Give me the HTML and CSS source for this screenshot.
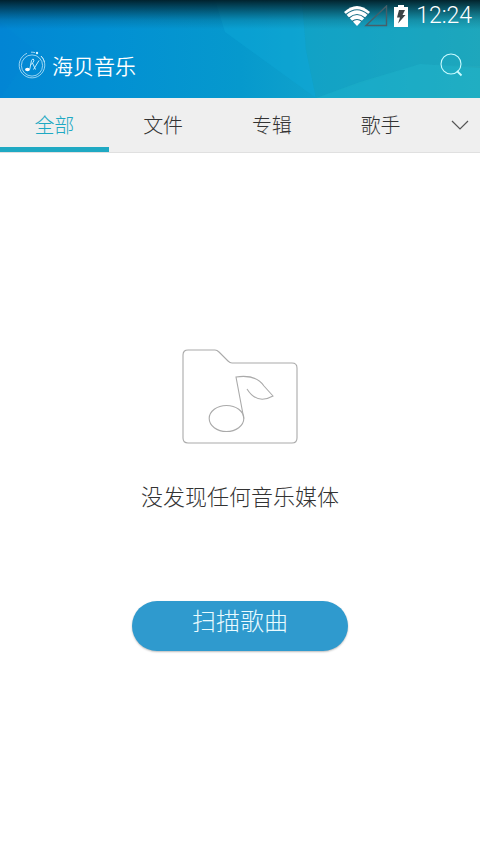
FILE: index.html
```html
<!DOCTYPE html>
<html lang="zh-CN">
<head>
<meta charset="utf-8">
<meta name="viewport" content="width=device-width, initial-scale=1">
<title>海贝音乐</title>
<link rel="stylesheet" href="styles.css">
</head>
<body>
<header class="header">
  <svg class="header-art" viewBox="0 0 480 98" preserveAspectRatio="none" aria-hidden="true">
    <defs>
      <linearGradient id="sky" x1="0" x2="1" y1="0" y2="0">
        <stop offset="0" stop-color="#0287d4"/>
        <stop offset=".22" stop-color="#0290d3"/>
        <stop offset=".5" stop-color="#0699cd"/>
        <stop offset=".66" stop-color="#10a2cb"/>
        <stop offset="1" stop-color="#22a9bc"/>
      </linearGradient>
      <linearGradient id="shade" x1="0" x2="0" y1="0" y2="1">
        <stop offset="0" stop-color="#001820" stop-opacity=".92"/>
        <stop offset=".3" stop-color="#00222d" stop-opacity=".62"/>
        <stop offset=".7" stop-color="#002e3c" stop-opacity=".18"/>
        <stop offset="1" stop-color="#003344" stop-opacity="0"/>
      </linearGradient>
    </defs>
    <rect width="480" height="98" fill="url(#sky)"/>
    <path d="M0 22 35 50 0 98Z" fill="#0580d5" opacity=".15"/>
    <path d="M215 0H302L306 50 316 98 225 32Z" fill="#10a9da" opacity=".4"/>
    <path d="M302 0H480V66L420 64 316 98 306 50Z" fill="#18a2be" opacity=".35"/>
    <path d="M316 98 360 82 420 64 480 68V98Z" fill="#20b4c9" opacity=".45"/>
    <rect width="480" height="29" fill="url(#shade)"/>
  </svg>
  <div class="status">
    <svg class="wifi" viewBox="0 0 26 22" aria-label="Wi-Fi" role="img">
      <path d="M0 7Q13-5 26 7L13 21Z" fill="#fff"/>
      <path d="M2 9.500Q13 0 24 9.500M5 13Q13 6 21 13M8 16.500Q13 12.500 18 16.500" fill="none" stroke="#1a6f87" stroke-width="1.100"/>
    </svg>
    <svg class="signal" viewBox="0 0 24 22" aria-label="无信号" role="img">
      <path d="M2 20.500H22.500V1Z" fill="none" stroke="#465f69" stroke-width="1.400"/>
    </svg>
    <svg class="battery" viewBox="0 0 14 22" aria-label="充电中" role="img">
      <path d="M0 2H4V0H10V2H14V22H0Z" fill="#fff"/>
      <path d="M5 5H11L8.500 10H11.500L4 18.500 6 12.500H3Z" fill="#3c4346"/>
    </svg>
    <time class="clock">12:24</time>
  </div>
  <div class="titlebar">
    <svg class="logo" viewBox="0 0 28 28" fill="none" stroke="#d8f4ff" aria-hidden="true">
      <path d="M9 2.300A12.800 12.800 0 1 0 23 5M13 1.200A13 13 0 0 1 17 1.600M23 5A12.800 12.800 0 0 1 26.500 11" stroke-width=".7"/>
      <circle cx="14" cy="14.500" r="10.600" stroke-width=".7"/>
      <circle cx="19" cy="2" r="1.200" fill="#d8f4ff" stroke="none"/>
      <ellipse cx="9.500" cy="18.500" rx="2.400" ry="1.700" fill="#fff" stroke="none"/>
      <path d="M11.700 18.500 13.500 9.500Q15 6.500 16 9Q16 11.500 12.500 14M14.500 12 17.500 18.500M21 9.500 15.500 18.500" stroke-width=".9"/>
    </svg>
    <h1 class="title">海贝音乐</h1>
    <button class="search" type="button" aria-label="搜索">
      <svg viewBox="0 0 24 24" fill="none" stroke="#c9fbff" aria-hidden="true">
        <circle cx="11" cy="11" r="10" stroke-width="1.100"/>
        <path d="M17 18 21.500 22.500" stroke-width="1.800"/>
      </svg>
    </button>
  </div>
</header>
<nav class="tabs">
  <a class="tab active" href="#all" aria-current="page">全部</a>
  <a class="tab" href="#files">文件</a>
  <a class="tab" href="#albums">专辑</a>
  <a class="tab" href="#artists">歌手</a>
  <button class="more" type="button" aria-label="更多">
    <svg viewBox="0 0 18 10" fill="none" stroke="#555" stroke-width="1.200" aria-hidden="true"><path d="M1 1 9 9 17 1"/></svg>
  </button>
</nav>
<main class="empty">
  <svg class="folder" viewBox="0 0 116 96" fill="none" stroke="#aaa" stroke-width="1.100" aria-hidden="true">
    <path d="M6 1H33Q35 1 37 3L46 12Q48 14 50 14H110Q115 14 115 19V89Q115 94 110 94H6Q1 94 1 89V6Q1 1 6 1Z"/>
    <ellipse cx="44.500" cy="69.500" rx="17.300" ry="13"/>
    <path d="M61.800 69.500 54 28Q74 25 82 37L91 47Q75 56 65 40"/>
  </svg>
  <p class="message">没发现任何音乐媒体</p>
  <button class="scan" type="button">扫描歌曲</button>
</main>
</body>
</html>
```
FILE: styles.css
```css
* {
  box-sizing: border-box;
}

body {
  margin: 0;
  min-height: 100vh;
  display: flex;
  flex-direction: column;
  background: #fff;
  color: #333;
  font-family: "Noto Sans CJK SC", sans-serif;
  font-weight: 300;
}

button {
  border: 0;
  padding: 0;
  background: none;
  font: inherit;
  cursor: pointer;
}

svg {
  display: block;
}

.header {
  position: relative;
  height: 98px;
  display: flex;
  flex-direction: column;
  color: #fff;
}

.header-art {
  position: absolute;
  inset: 0;
  width: 100%;
  height: 100%;
  z-index: -1;
}

.status {
  height: 32px;
  padding-right: 8px;
  display: flex;
  align-items: center;
  justify-content: flex-end;
}

.wifi {
  width: 26px;
  height: 22px;
}

.signal {
  width: 24px;
  height: 22px;
  margin-left: -6px;
}

.battery {
  width: 14px;
  height: 22px;
  margin: 0 8px 0 6px;
}

.clock {
  font-family: Roboto, sans-serif;
  font-size: 23px;
  line-height: 34px;
}

.titlebar {
  flex: 1;
  padding: 0 16px 0 18px;
  display: flex;
  align-items: center;
}

.logo {
  width: 28px;
  height: 28px;
}

.title {
  flex: 1;
  margin: 0 0 0 6px;
  font-size: 21px;
  font-weight: 350;
  line-height: 32px;
}

.search svg {
  width: 24px;
  height: 24px;
}

.tabs {
  height: 55px;
  display: flex;
  background: #efefef;
  border-bottom: 1px solid #e0e0e0;
}

.tab {
  flex: 1;
  padding-top: 4px;
  border-bottom: 5px solid transparent;
  color: #333;
  font-size: 20px;
  line-height: 46px;
  text-align: center;
  text-decoration: none;
}

.tab.active {
  border-color: #1fa9c3;
  color: #1fa9c3;
}

.more {
  width: 45px;
  display: flex;
  align-items: center;
  justify-content: center;
  padding-left: 5px;
}

.more svg {
  width: 18px;
  height: 10px;
}

.empty {
  flex: 1;
  padding-bottom: 6px;
  display: flex;
  flex-direction: column;
  align-items: center;
  justify-content: center;
}

.folder {
  width: 116px;
  height: 96px;
}

.message {
  margin: 34px 0 90px;
  font-size: 22px;
  line-height: 32px;
}

.scan {
  width: 45%;
  height: 50px;
  padding-bottom: 12px;
  border-radius: 25px;
  background: #2f9ace;
  box-shadow: 0 1px 2px #0004;
  color: #e9fbff;
  font-size: 24px;
  line-height: 38px;
}
```
